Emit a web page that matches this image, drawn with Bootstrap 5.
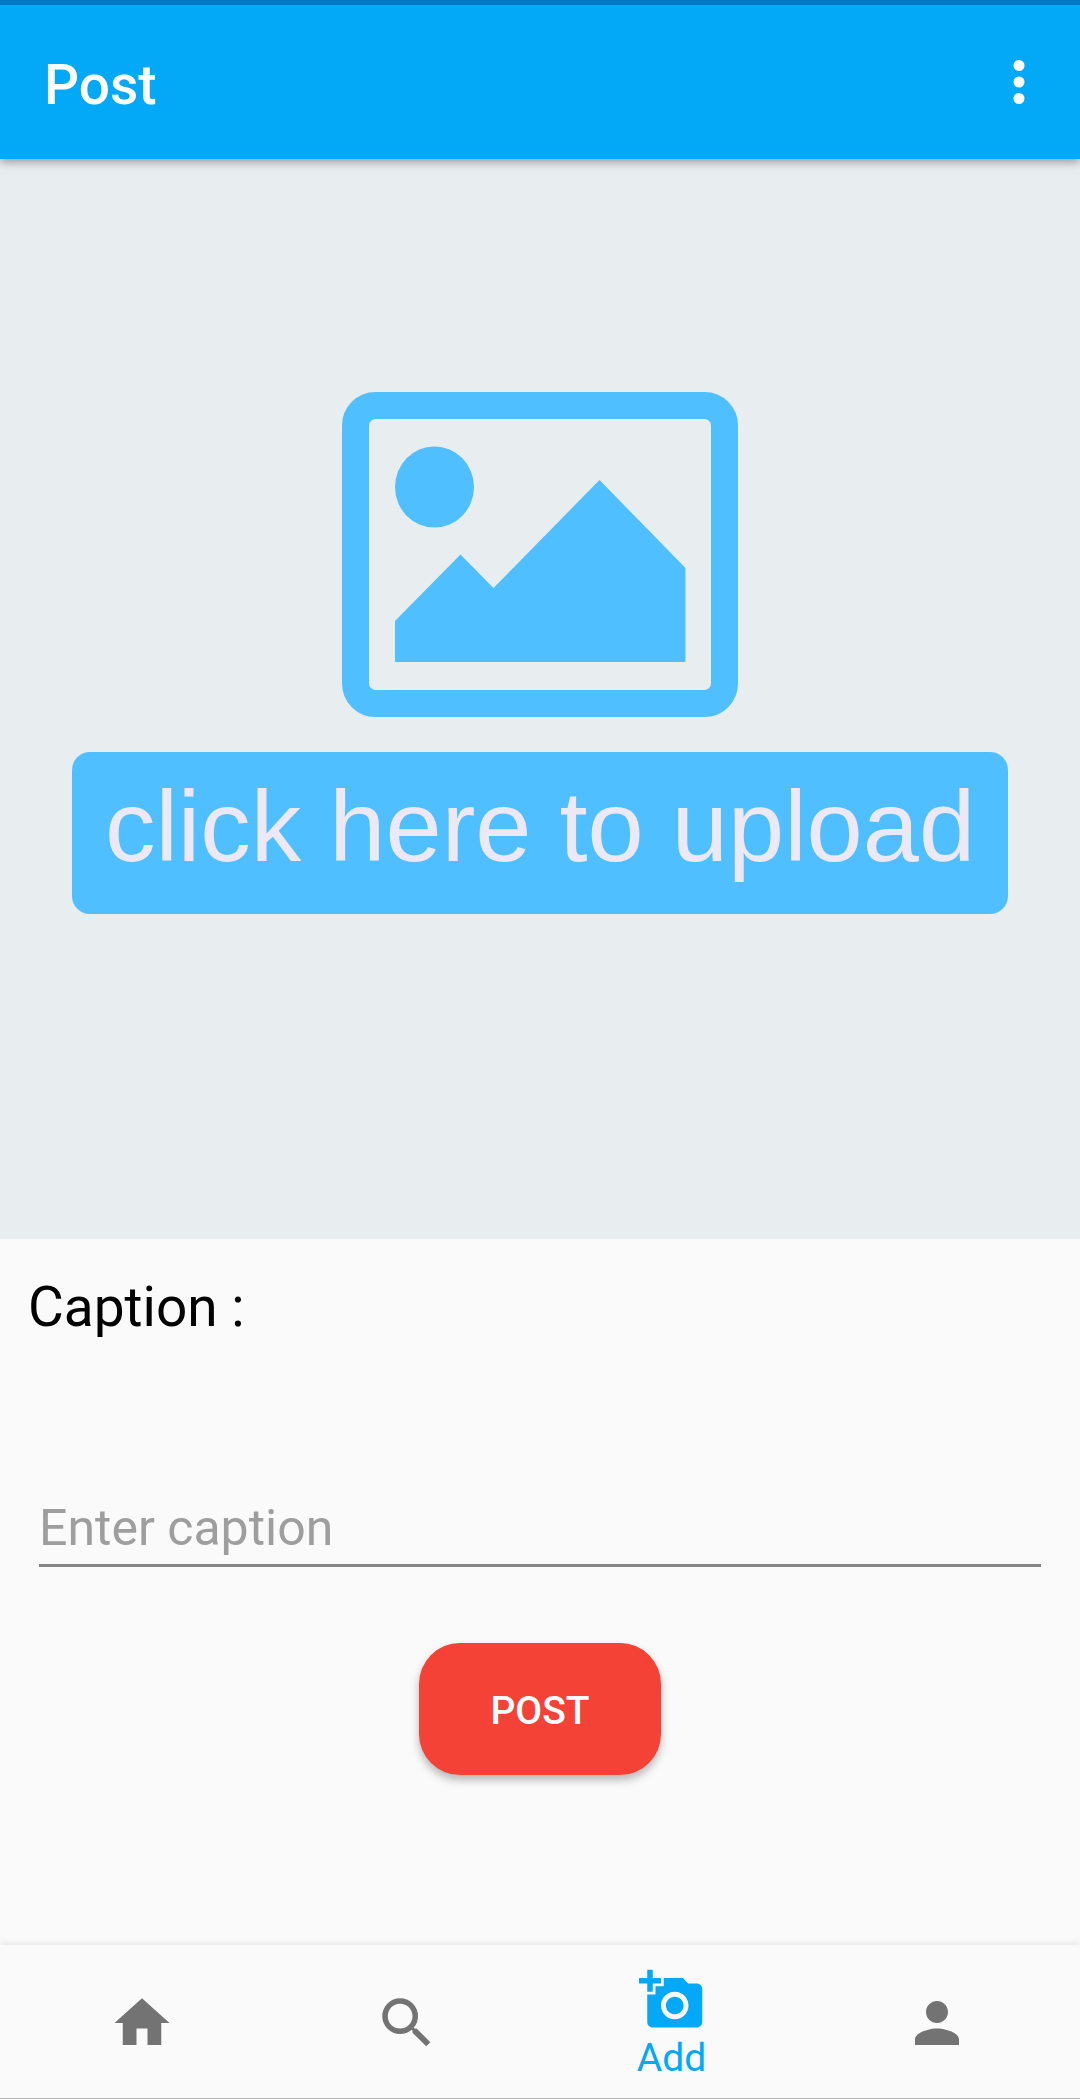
<!DOCTYPE html>
<html lang="en">
<head>
<meta charset="utf-8">
<meta name="viewport" content="width=device-width, initial-scale=1">
<title>Post</title>
<link href="https://cdn.jsdelivr.net/npm/bootstrap@5.3.0/dist/css/bootstrap.min.css" rel="stylesheet">
<style>
  body { background: #fafafa; color: #000; font-family: Roboto, "Noto Sans", sans-serif; }
  .app-bar { background: #03a9f7; border-top: 5px solid #0079c2; height: 159px; padding: 0 28px 0 44px; box-shadow: 0 3px 9px rgba(0, 0, 0, .36); z-index: 2; }
  .app-title { font-size: 55px; line-height: 64px; font-weight: 500; padding-top: 6px; }
  .glyph { width: 66px; height: 66px; fill: currentColor; display: block; }
  .upload-area { background: #e8edf0; aspect-ratio: 1; padding: 0 72px 92px; gap: 35px; }
  .upload-picture { width: 396px; max-width: 60%; }
  .upload-btn, .upload-btn:hover { background: #50bfff; color: #ece8f6; }
  .upload-btn { border-radius: 18px; font-family: "Liberation Sans", Arial, sans-serif; font-size: 101px; white-space: nowrap; }
  .upload-btn > span { display: block; padding-bottom: 14px; line-height: 148px; }
  .caption-form { padding: 36px 28px 0; }
  .caption-label { font-size: 55px; line-height: 64px; }
  .caption-field { padding: 159px 11px 76px; }
  .caption-input { border: 0; border-bottom: 3px solid #858585; border-radius: 0; background: transparent; padding: 0 0 6px; font-size: 50px; line-height: 60px; height: 69px; }
  .caption-input::placeholder { color: #9e9e9e; }
  .caption-input:focus { background: transparent; box-shadow: none; border-color: #03a9f7; }
  .post-btn, .post-btn:hover { background: #f44336; color: #fff; }
  .post-btn { width: 242px; height: 132px; border-radius: 41px; font-size: 39px; font-weight: 500; box-shadow: 0 5px 8px rgba(0, 0, 0, .27); }
  .post-btn > span { display: block; padding-top: 4px; }
  .tab-bar { height: 154px; padding: 2px 11px 0 9px; background: #fafafa; border-bottom: 1px solid #b0b0b0; box-shadow: 0 -2px 7px rgba(0, 0, 0, .08); }
  .tab-bar .nav-link { color: #737373; font-size: 39px; line-height: 40px; gap: 5px; }
  .tab-bar .nav-link.active { color: #03a9f7; }
</style>
<script src="https://cdn.jsdelivr.net/npm/bootstrap@5.3.0/dist/js/bootstrap.bundle.min.js"></script>
</head>
<body class="d-flex flex-column min-vh-100">

<header class="app-bar d-flex align-items-center justify-content-between position-relative text-white">
  <h1 class="app-title m-0">Post</h1>
  <button type="button" class="btn p-0 border-0 text-white" aria-label="More options">
    <svg class="glyph" viewBox="0 0 24 24" aria-hidden="true"><circle cx="12" cy="6" r="2"/><circle cx="12" cy="12" r="2"/><circle cx="12" cy="18" r="2"/></svg>
  </button>
</header>

<main>
  <section class="upload-area d-flex flex-column align-items-center justify-content-center">
    <svg class="upload-picture" viewBox="0 0 396 325" fill="#50bfff" aria-hidden="true">
      <rect x="13.5" y="13.5" width="369" height="298" rx="20" fill="none" stroke="#50bfff" stroke-width="27"/>
      <ellipse cx="92.5" cy="95" rx="39.5" ry="40.5"/>
      <path d="M53 229 118.500 162.500 151.500 196 257.500 88 343.500 176V270H53Z"/>
    </svg>
    <button type="button" class="upload-btn btn w-100 p-0 border-0"><span>click here to upload</span></button>
  </section>

  <form class="caption-form">
    <label class="caption-label d-block" for="caption">Caption :</label>
    <div class="caption-field">
      <input type="text" class="caption-input form-control" id="caption" placeholder="Enter caption">
    </div>
    <button type="button" class="post-btn btn d-block mx-auto p-0 border-0"><span>POST</span></button>
  </form>
</main>

<nav class="tab-bar nav nav-fill flex-nowrap mt-auto" aria-label="Main">
  <a class="nav-link p-0 w-25 d-flex flex-column align-items-center justify-content-center" href="#" aria-label="Home">
    <svg class="glyph" viewBox="0 0 24 24" aria-hidden="true"><path d="M10 20v-6h4v6h5v-8h3L12 3 2 12h3v8z"/></svg>
  </a>
  <a class="nav-link p-0 w-25 d-flex flex-column align-items-center justify-content-center" href="#" aria-label="Search">
    <svg class="glyph" viewBox="0 0 24 24" aria-hidden="true"><path d="M15.500 14h-.79l-.28-.27A6.471 6.471 0 0 0 16 9.500 6.500 6.500 0 1 0 9.500 16c1.610 0 3.090-.59 4.230-1.570l.27.28v.79l5 4.990L20.490 19l-4.990-5zm-6 0C7.010 14 5 11.990 5 9.500S7.010 5 9.500 5 14 7.010 14 9.500 11.990 14 9.500 14z"/></svg>
  </a>
  <a class="nav-link active p-0 w-25 d-flex flex-column align-items-center justify-content-center" href="#" aria-current="page">
    <svg class="glyph" viewBox="0 0 24 24" aria-hidden="true"><path d="M3 4V1h2v3h3v2H5v3H3V6H0V4h3zm3 6V7h3V4h7l1.830 2H21c1.100 0 2 .9 2 2v12c0 1.100-.9 2-2 2H5c-1.100 0-2-.9-2-2V10h3zm7 9c2.760 0 5-2.240 5-5s-2.240-5-5-5-5 2.240-5 5 2.240 5 5 5zm-3.200-5c0 1.770 1.430 3.200 3.200 3.200s3.200-1.430 3.200-3.200-1.430-3.200-3.200-3.200-3.200 1.430-3.200 3.200z"/></svg>
    <span>Add</span>
  </a>
  <a class="nav-link p-0 w-25 d-flex flex-column align-items-center justify-content-center" href="#" aria-label="Profile">
    <svg class="glyph" viewBox="0 0 24 24" aria-hidden="true"><path d="M12 12c2.210 0 4-1.790 4-4s-1.790-4-4-4-4 1.790-4 4 1.790 4 4 4zm0 2c-2.670 0-8 1.340-8 4v2h16v-2c0-2.660-5.330-4-8-4z"/></svg>
  </a>
</nav>

</body>
</html>
